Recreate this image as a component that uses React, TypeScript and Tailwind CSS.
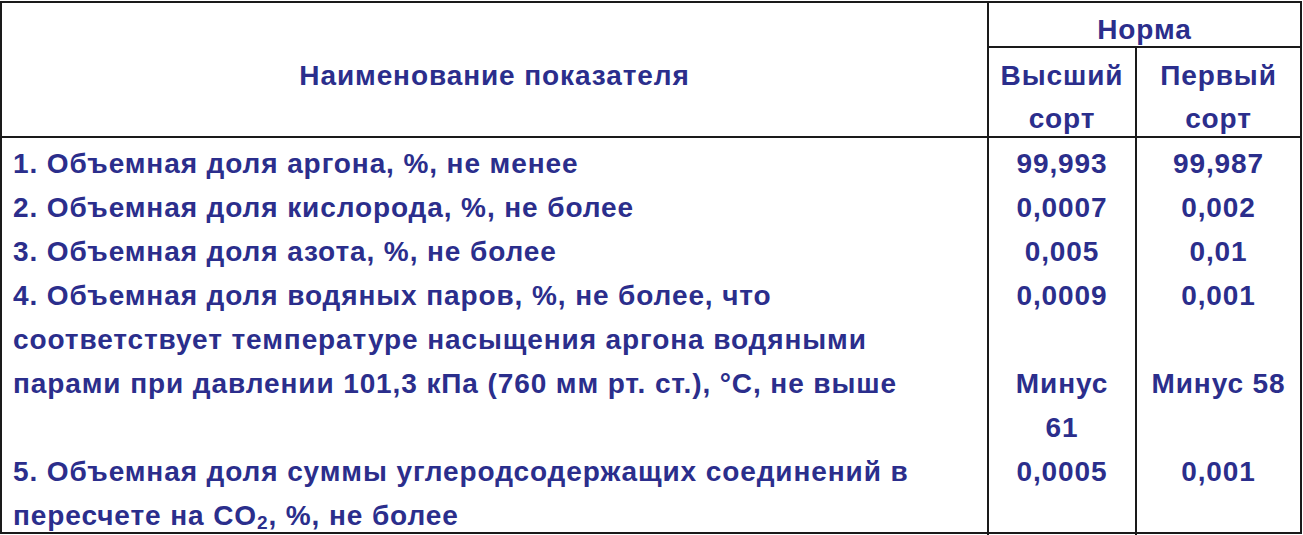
export default function App() {
  const line = "border-[#1a1a1a]";
  return (
    <div className="w-[1303px] h-[535px] bg-white pt-px font-['Liberation_Sans',Arial,sans-serif] font-bold text-[#2b2e8c] text-[28px] tracking-[0.9px] leading-[44px]">
      <div className={`w-[1302px] h-[533px] border-2 ${line} flex flex-col`}>
        {/* header */}
        <div className={`h-[135px] border-b-2 ${line} flex shrink-0`}>
          <div className={`w-[987px] border-r-2 ${line} text-center pt-[51px] leading-[43px]`}>
            Наименование показателя
          </div>
          <div className="flex-1 flex flex-col">
            <div className={`h-[45px] border-b-2 ${line} text-center pt-[5px] leading-[43px]`}>Норма</div>
            <div className="flex-1 flex">
              <div className={`w-[148px] border-r-2 ${line} text-center pt-[6px] leading-[43px]`}>
                Высший
                <br />
                сорт
              </div>
              <div className="flex-1 text-center pt-[6px] leading-[43px]">
                Первый
                <br />
                сорт
              </div>
            </div>
          </div>
        </div>
        {/* body */}
        <div className="flex-1 flex">
          <div className={`w-[987px] border-r-2 ${line} pl-[11px] pt-[4px] whitespace-nowrap`}>
            <div>1. Объемная доля аргона, %, не менее</div>
            <div>2. Объемная доля кислорода, %, не более</div>
            <div>3. Объемная доля азота, %, не более</div>
            <div className="h-[176px]">
              4. Объемная доля водяных паров, %, не более, что
              <br />
              соответствует температуре насыщения аргона водяными
              <br />
              парами при давлении 101,3 кПа (760 мм рт. ст.), °C, не выше
            </div>
            <div>
              5. Объемная доля суммы углеродсодержащих соединений в
              <br />
              пересчете на CO
              <sub className="text-[19px] leading-none align-baseline relative top-[4px]">2</sub>, %, не более
            </div>
          </div>
          <div className={`w-[148px] border-r-2 ${line} text-center pt-[4px]`}>
            <div>99,993</div>
            <div>0,0007</div>
            <div>0,005</div>
            <div className="h-[176px]">
              <div>0,0009</div>
              <div className="h-[44px]" />
              <div>Минус</div>
              <div>61</div>
            </div>
            <div>0,0005</div>
          </div>
          <div className="flex-1 text-center pt-[4px] whitespace-nowrap">
            <div>99,987</div>
            <div>0,002</div>
            <div>0,01</div>
            <div className="h-[176px]">
              <div>0,001</div>
              <div className="h-[44px]" />
              <div>Минус 58</div>
            </div>
            <div>0,001</div>
          </div>
        </div>
      </div>
    </div>
  );
}
